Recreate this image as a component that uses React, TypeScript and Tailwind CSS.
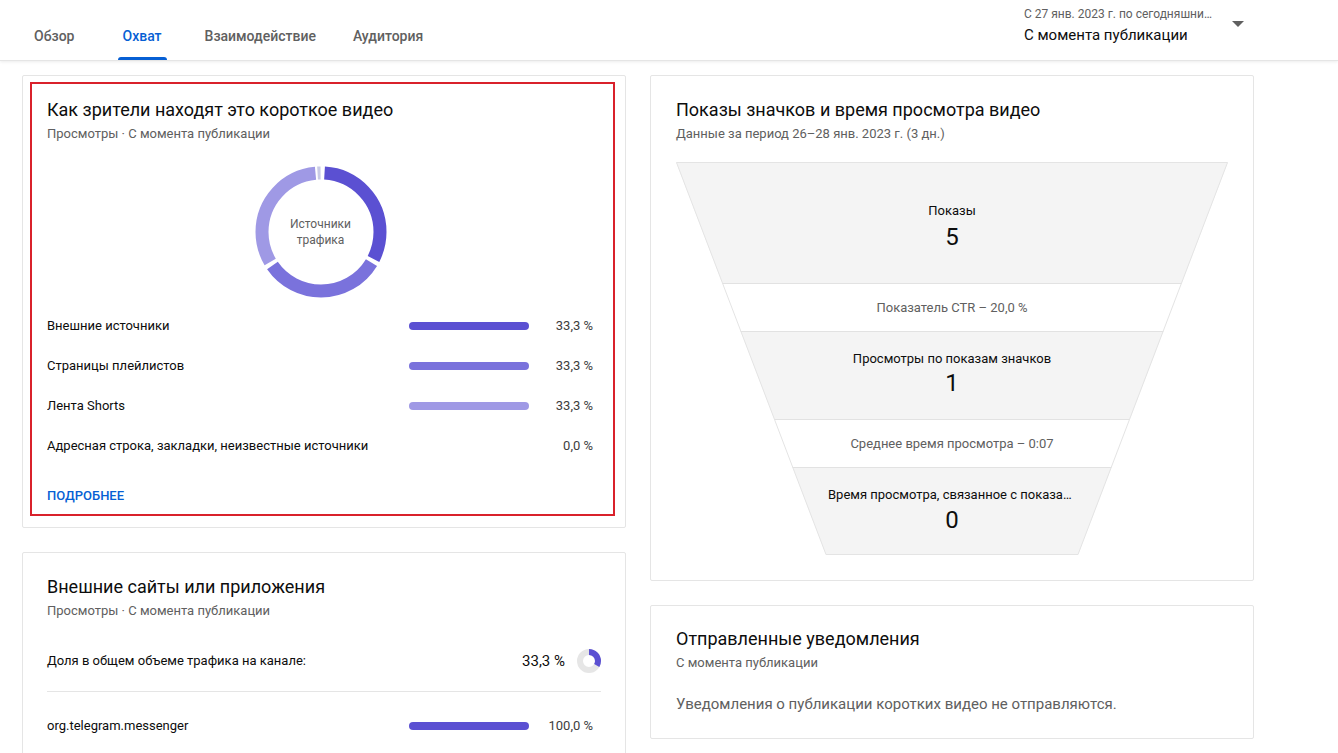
import React from 'react';

// основные цвета источников
const PURPLE_1 = '#5b50d2';
const PURPLE_2 = '#7a72dc';
const PURPLE_3 = '#9f99e5';

const sources = [
  { label: 'Внешние источники', value: '33,3 %', color: PURPLE_1 },
  { label: 'Страницы плейлистов', value: '33,3 %', color: PURPLE_2 },
  { label: 'Лента Shorts', value: '33,3 %', color: PURPLE_3 },
  { label: 'Адресная строка, закладки, неизвестные источники', value: '0,0 %', color: null },
];

function Arc({ r, from, to, color, width }: { r: number; from: number; to: number; color: string; width: number }) {
  const c = 2 * Math.PI * r;
  const len = ((to - from) / 360) * c;
  return (
    <circle
      r={r}
      cx={0}
      cy={0}
      fill="none"
      stroke={color}
      strokeWidth={width}
      strokeDasharray={`${len} ${c - len}`}
      strokeDashoffset={-(from / 360) * c}
      transform="rotate(-90)"
    />
  );
}

function Donut() {
  return (
    <div className="relative w-[132px] h-[132px]">
      <svg width="132" height="132" viewBox="-66 -66 132 132">
        <Arc r={59} from={3.5} to={117} color={PURPLE_1} width={13} />
        <Arc r={59} from={121} to={235} color={PURPLE_2} width={13} />
        <Arc r={59} from={239} to={354} color={PURPLE_3} width={13} />
        <Arc r={59} from={356} to={359} color="#c9cbe6" width={13} />
      </svg>
      <div className="absolute inset-0 flex items-center justify-center text-center text-[12px] leading-[16px] text-[#606060]">
        Источники
        <br />
        трафика
      </div>
    </div>
  );
}

function MiniDonut() {
  return (
    <svg width="24" height="24" viewBox="-12 -12 24 24">
      <circle r={9} cx={0} cy={0} fill="none" stroke="#e6e6e6" strokeWidth={6} />
      <Arc r={9} from={0} to={120} color={PURPLE_1} width={6} />
    </svg>
  );
}

function BarRow({ label, value, color }: { label: string; value: string; color: string | null }) {
  return (
    <div className="flex items-center h-[40px] pr-2 text-[13px] text-[#0d0d0d]">
      <div className="flex-1 truncate">{label}</div>
      <div className="w-[120px] h-[8px]">
        {color && <div className="w-full h-full rounded-full" style={{ backgroundColor: color }} />}
      </div>
      <div className="w-[64px] text-right text-[#3d3d3d]">{value}</div>
    </div>
  );
}

function CardHead({ title, sub }: { title: string; sub: string }) {
  return (
    <div>
      <div className="text-[18px] leading-[24px] text-[#0d0d0d]">{title}</div>
      <div className="mt-[3px] text-[13px] leading-[18px] text-[#606060]">{sub}</div>
    </div>
  );
}

function Funnel() {
  return (
    <div className="relative w-[552px] h-[393px]">
      <div className="h-full flex flex-col text-center [clip-path:polygon(0_0,100%_0,72.83%_100%,27.17%_100%)]">
        <div className="h-[121px] bg-[#f4f4f4] flex flex-col items-center justify-center pt-[8px]">
          <div className="text-[13px] leading-[18px] text-[#0d0d0d]">Показы</div>
          <div className="mt-[2px] text-[24px] leading-[30px] text-[#0d0d0d]">5</div>
        </div>
        <div className="h-[48px] border-t border-[#e2e2e2] bg-white flex items-center justify-center text-[13px] text-[#606060]">
          Показатель CTR – 20,0 %
        </div>
        <div className="h-[88px] border-t border-[#e2e2e2] bg-[#f4f4f4] flex flex-col items-center justify-center pb-[4px]">
          <div className="text-[13px] leading-[18px] text-[#0d0d0d]">Просмотры по показам значков</div>
          <div className="text-[24px] leading-[30px] text-[#0d0d0d]">1</div>
        </div>
        <div className="h-[48px] border-t border-[#e2e2e2] bg-white flex items-center justify-center text-[13px] text-[#606060]">
          Среднее время просмотра – 0:07
        </div>
        <div className="h-[88px] border-t border-[#e2e2e2] bg-[#f4f4f4] flex flex-col items-center justify-center pb-[2px]">
          <div className="w-[248px] truncate text-[13px] leading-[18px] text-[#0d0d0d]">
            Время просмотра, связанное с показами значков
          </div>
          <div className="mt-[1px] text-[24px] leading-[30px] text-[#0d0d0d]">0</div>
        </div>
      </div>
      <svg className="absolute inset-0 pointer-events-none" width="552" height="393" viewBox="0 0 552 393">
        <polygon points="0.5,0.5 551.5,0.5 402,392.5 150,392.5" fill="none" stroke="#e4e4e4" strokeWidth="1" />
      </svg>
    </div>
  );
}

export default function App() {
  return (
    <div className="w-[1338px] h-[753px] overflow-hidden bg-white font-['Roboto',sans-serif]">
      {/* шапка с вкладками */}
      <div className="h-[61px] flex border-b border-[#e5e5e5] shadow-[0_1px_3px_rgba(0,0,0,0.08)]">
        <div className="flex items-stretch pl-[29px] text-[14px] font-medium text-[#606060]">
          <div className="px-[5px] flex items-center pt-[12px]">Обзор</div>
          <div className="ml-[38px] px-[5px] flex items-center pt-[12px] text-[#065fd4] relative">
            Охват
            <div className="absolute left-0 right-0 bottom-0 h-[3px] rounded-t-[3px] bg-[#065fd4]" />
          </div>
          <div className="ml-[33px] px-[5px] flex items-center pt-[12px]">Взаимодействие</div>
          <div className="ml-[27px] px-[5px] flex items-center pt-[12px]">Аудитория</div>
        </div>
        <div className="ml-auto mr-[94px] flex items-start pt-[6px]">
          <div className="w-[188px]">
            <div className="text-[12px] leading-[16px] text-[#606060] truncate">С 27 янв. 2023 г. по сегодняшний день</div>
            <div className="mt-[3px] text-[15px] leading-[20px] text-[#0d0d0d]">С момента публикации</div>
          </div>
          <div className="ml-[20px] mt-[15px] w-0 h-0 border-l-[6px] border-r-[6px] border-t-[6px] border-l-transparent border-r-transparent border-t-[#606060]" />
        </div>
      </div>

      <div className="flex gap-[24px] pl-[22px] pt-[14px]">
        {/* левая колонка */}
        <div className="w-[604px] flex flex-col gap-[24px]">
          <div className="relative border border-[#e5e5e5] rounded-[2px] px-[24px] pt-[22px] pb-[21px]">
            <CardHead title="Как зрители находят это короткое видео" sub="Просмотры · С момента публикации" />
            <div className="mt-[23px] flex justify-center pr-[7px]">
              <Donut />
            </div>
            <div className="mt-[8px]">
              {sources.map((s) => (
                <BarRow key={s.label} {...s} />
              ))}
            </div>
            <div className="mt-[20px] text-[13px] leading-[20px] font-medium text-[#065fd4]">ПОДРОБНЕЕ</div>
            <div className="absolute left-[7px] top-[6px] right-[10px] bottom-[11px] border-2 border-[#d9212b] pointer-events-none" />
          </div>

          <div className="border border-[#e5e5e5] rounded-[2px] px-[24px] pt-[22px] pb-[20px]">
            <CardHead title="Внешние сайты или приложения" sub="Просмотры · С момента публикации" />
            <div className="mt-[29px] flex items-center text-[13px] text-[#0d0d0d]">
              <div className="flex-1">Доля в общем объеме трафика на канале:</div>
              <div className="text-[15px] mr-[12px]">33,3 %</div>
              <MiniDonut />
            </div>
            <div className="mt-[18px] border-t border-[#e5e5e5]" />
            <div className="mt-[14px]">
              <BarRow label="org.telegram.messenger" value="100,0 %" color={PURPLE_1} />
            </div>
          </div>
        </div>

        {/* правая колонка */}
        <div className="w-[604px] flex flex-col gap-[24px]">
          <div className="border border-[#e5e5e5] rounded-[2px] px-[25px] pt-[22px] pb-[25px]">
            <CardHead title="Показы значков и время просмотра видео" sub="Данные за период 26–28 янв. 2023 г. (3 дн.)" />
            <div className="mt-[19px]">
              <Funnel />
            </div>
          </div>

          <div className="border border-[#e5e5e5] rounded-[2px] px-[25px] pt-[21px] pb-[24px]">
            <CardHead title="Отправленные уведомления" sub="С момента публикации" />
            <div className="mt-[22px] text-[15px] leading-[20px] text-[#606060]">
              Уведомления о публикации коротких видео не отправляются.
            </div>
          </div>
        </div>
      </div>
    </div>
  );
}
